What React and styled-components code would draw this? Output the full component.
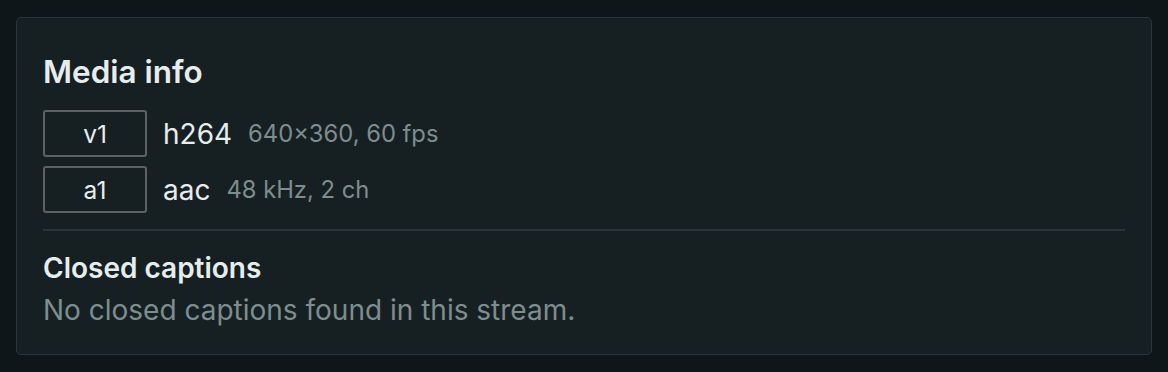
import styled, { createGlobalStyle } from "styled-components";

const Global = createGlobalStyle`
    body {
        margin: 0;
        background: #0f1619;
        font-family: Inter, "Noto Sans", sans-serif;
    }
`;

const streams = [
    { id: "v1", codec: "h264", detail: "640×360, 60 fps" },
    { id: "a1", codec: "aac", detail: "48 kHz, 2 ch" },
];

const App = () => {
    return (
        <Page>
            <Global />
            <Card>
                <Title>Media info</Title>
                <Streams>
                    {streams.map((s) => (
                        <Row key={s.id}>
                            <Tag>{s.id}</Tag>
                            <Codec>{s.codec}</Codec>
                            <Detail>{s.detail}</Detail>
                        </Row>
                    ))}
                </Streams>
                <Divider />
                <SubTitle>Closed captions</SubTitle>
                <Muted>No closed captions found in this stream.</Muted>
            </Card>
        </Page>
    );
};

const Page = styled.div`
    padding: 17px 16px 16px 16px;
`;

const Card = styled.section`
    background: #162022;
    border: 1px solid #26363a;
    border-radius: 5px;
    padding: 34px 26px 27px 26px;
    display: flex;
    flex-direction: column;
`;

const Title = styled.h2`
    margin: 0 0 18px 0;
    font-size: 31.5px;
    font-weight: 600;
    line-height: 40px;
    color: #e6eded;
`;

const Streams = styled.div`
    display: flex;
    flex-direction: column;
    gap: 9px;
`;

const Row = styled.div`
    display: flex;
    align-items: center;
`;

const Tag = styled.span`
    box-sizing: border-box;
    width: 104px;
    height: 47px;
    border: 2px solid #5c6264;
    border-radius: 3px;
    display: flex;
    align-items: center;
    justify-content: center;
    font-size: 24.5px;
    color: #e6eded;
    margin-right: 16px;
`;

const Codec = styled.span`
    font-size: 28px;
    color: #e6eded;
    margin-right: 16px;
`;

const Detail = styled.span`
    font-size: 23.75px;
    color: #7e8d8d;
`;

const Divider = styled.hr`
    border: none;
    border-top: 2px solid #26363a;
    margin: 16px 0 20px 0;
`;

const SubTitle = styled.h3`
    margin: 0 0 8px 0;
    font-size: 28px;
    font-weight: 600;
    line-height: 34px;
    color: #e6eded;
`;

const Muted = styled.p`
    margin: 0;
    font-size: 28px;
    line-height: 34px;
    color: #7e8d8d;
`;

export default App;
